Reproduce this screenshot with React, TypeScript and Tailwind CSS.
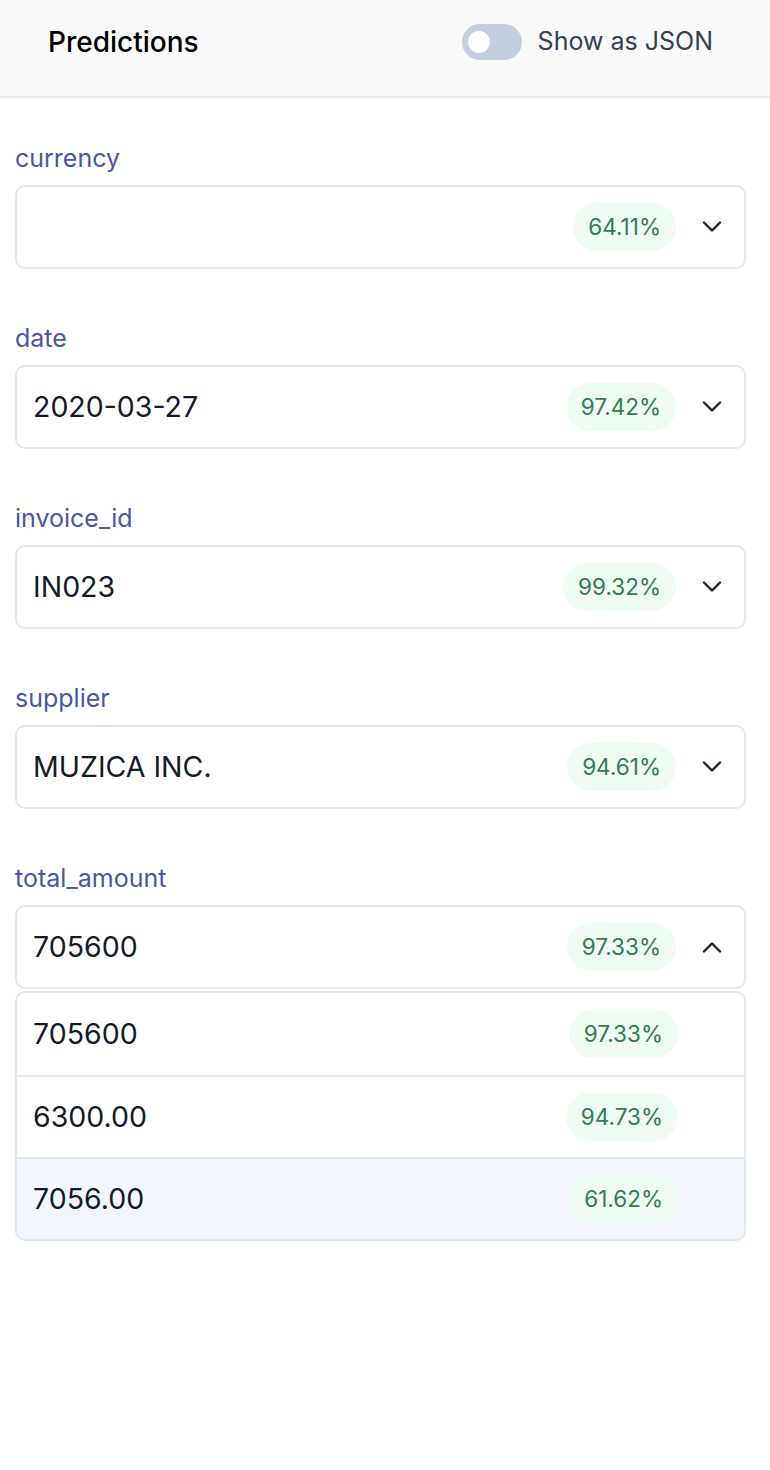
import { useState } from 'react';

type Candidate = {
    value: string;
    confidence: string;
};

type Field = {
    name: string;
    value: string;
    confidence: string;
    candidates?: Candidate[];
};

const fields: Field[] = [
    { name: 'currency', value: '', confidence: '64.11%' },
    { name: 'date', value: '2020-03-27', confidence: '97.42%' },
    { name: 'invoice_id', value: 'IN023', confidence: '99.32%' },
    { name: 'supplier', value: 'MUZICA INC.', confidence: '94.61%' },
    {
        name: 'total_amount',
        value: '705600',
        confidence: '97.33%',
        candidates: [
            { value: '705600', confidence: '97.33%' },
            { value: '6300.00', confidence: '94.73%' },
            { value: '7056.00', confidence: '61.62%' },
        ],
    },
];

function Chevron({ up }: { up?: boolean }) {
    return (
        <svg width="20" height="12" viewBox="0 0 20 12" fill="none" className="shrink-0">
            <polyline
                points={up ? '2,10.5 10,2.5 18,10.5' : '2,1.5 10,9.5 18,1.5'}
                stroke="#1c2033"
                strokeWidth="2.4"
                strokeLinecap="round"
                strokeLinejoin="round"
            />
        </svg>
    );
}

function Badge({ text }: { text: string }) {
    return (
        <span className="rounded-full bg-[#effcf3] px-[15px] h-12 flex items-center text-[22.5px] text-[#347a52]">
            {text}
        </span>
    );
}

function FieldRow({ field }: { field: Field }) {
    const open = !!field.candidates;
    return (
        <div className="mb-[51px]">
            <div className="text-[25px] leading-[36px] text-[#4b56a3] mb-[9px]">{field.name}</div>
            <div className="h-[84px] rounded-[10px] border-2 border-[#e3e8f0] bg-white flex items-center pl-[16px] pr-[22px]">
                <span className="flex-1 text-[28.5px] text-[#131a2a]">{field.value}</span>
                <Badge text={field.confidence} />
                <span className="ml-[26px]">
                    <Chevron up={open} />
                </span>
            </div>
            {open && (
                <div className="mt-[2px] rounded-[10px] border-2 border-[#e3e8f0] overflow-hidden">
                    {field.candidates!.map((c, i) => (
                        <div
                            key={c.value}
                            className={
                                'h-[82px] flex items-center pl-[16px] pr-[66px] ' +
                                (i > 0 ? 'border-t-2 border-[#e3e8f0] ' : '') +
                                (i === 2 ? 'bg-[#f3f6fe]' : 'bg-white')
                            }
                        >
                            <span className="flex-1 text-[28.5px] text-[#131a2a]">{c.value}</span>
                            <Badge text={c.confidence} />
                        </div>
                    ))}
                </div>
            )}
        </div>
    );
}

export default function App() {
    const [asJson, setAsJson] = useState(false);

    return (
        <div className="w-[770px] min-h-[1470px] bg-white font-['Inter',sans-serif]">
            <div className="h-[98px] bg-[#fafafa] border-b-2 border-[#ebebef] flex items-center justify-between pl-[48px] pr-[57px] pb-[12px]">
                <h1 className="text-[28px] font-medium text-black">Predictions</h1>
                <label className="flex items-center gap-[16px] cursor-pointer">
                    <button
                        onClick={() => setAsJson(!asJson)}
                        className={
                            'w-[60px] h-[36px] rounded-full p-[6px] flex items-center ' +
                            (asJson ? 'bg-indigo-500 justify-end' : 'bg-[#c5cedd] justify-start')
                        }
                    >
                        <span className="w-[22px] h-[22px] rounded-full bg-white block" />
                    </button>
                    <span className="text-[25px] text-[#354052]">Show as JSON</span>
                </label>
            </div>
            <div className="pl-[15px] pr-[24px] pt-[42px]">
                {fields.map((f) => (
                    <FieldRow key={f.name} field={f} />
                ))}
            </div>
        </div>
    );
}
